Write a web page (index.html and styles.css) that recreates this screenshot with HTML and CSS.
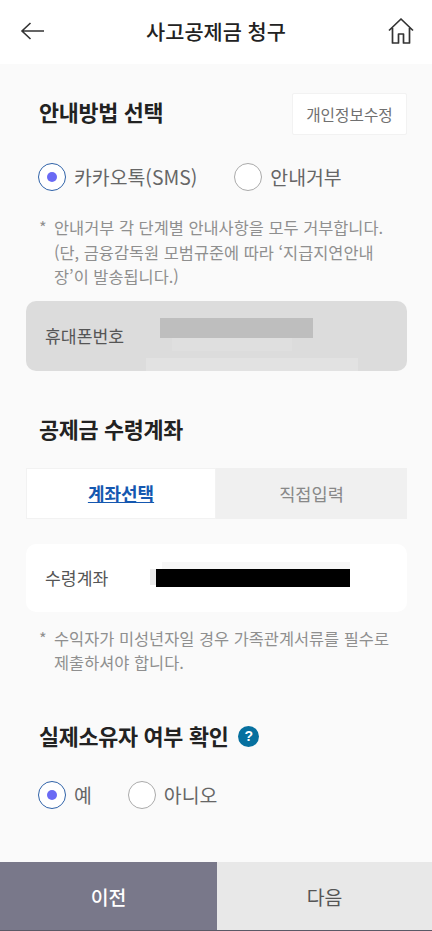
FILE: index.html
```html
<!DOCTYPE html>
<html lang="ko">
<head>
<meta charset="utf-8">
<title>사고공제금 청구</title>
<link rel="stylesheet" href="styles.css">
</head>
<body>
<div class="app">
  <header class="topbar">
    <svg class="ico-back" viewBox="0 0 26 20" width="26" height="20"><path d="M24 10H2M10.5 2 2 10l8.5 8" fill="none" stroke="#333" stroke-width="1.6"/></svg>
    <h1 class="title">사고공제금 청구</h1>
    <svg class="ico-home" viewBox="0 0 28 28" width="28" height="28"><path d="M2 13.5 14 2l12 11.5M5.5 11v15h6v-9h5v9h6V11" fill="none" stroke="#333" stroke-width="1.7" stroke-linejoin="round"/></svg>
  </header>
  <main class="content">
    <section class="head-row">
      <h2 class="sec-title">안내방법 선택</h2>
      <div class="edit-btn">개인정보수정</div>
    </section>
    <div class="radios r1">
      <label class="radio on"><i class="dot"></i><span>카카오톡(SMS)</span></label>
      <label class="radio"><i class="dot"></i><span>안내거부</span></label>
    </div>
    <div class="note n1"><span class="star">*</span><p>안내거부 각 단계별 안내사항을 모두 거부합니다.<br>(단, 금융감독원 모범규준에 따라 ‘지급지연안내<br>장’이 발송됩니다.)</p></div>
    <div class="field phone">
      <span class="field-label">휴대폰번호</span>
      <i class="mask m1"></i><i class="mask m2"></i><i class="mask m3"></i>
    </div>
    <h2 class="sec-title t2">공제금 수령계좌</h2>
    <div class="tabs">
      <div class="tab active">계좌선택</div>
      <div class="tab">직접입력</div>
    </div>
    <div class="field account">
      <span class="field-label">수령계좌</span>
      <i class="mask m5"></i><i class="mask m6"></i><i class="mask m4"></i>
    </div>
    <div class="note n2"><span class="star">*</span><p>수익자가 미성년자일 경우 가족관계서류를 필수로<br>제출하셔야 합니다.</p></div>
    <div class="owner-title">
      <h2 class="sec-title">실제소유자 여부 확인</h2>
      <span class="help">?</span>
    </div>
    <div class="radios r2">
      <label class="radio on"><i class="dot"></i><span>예</span></label>
      <label class="radio"><i class="dot"></i><span>아니오</span></label>
    </div>
  </main>
  <footer class="bottom">
    <div class="bbtn prev">이전</div>
    <div class="bbtn next">다음</div>
  </footer>
</div>
</body>
</html>
```

FILE: styles.css
```css
* { box-sizing: border-box; }
html, body { margin: 0; padding: 0; }
body { font-family: "Noto Sans CJK KR", "Noto Sans", sans-serif; background: #fafafa; color: #222; }
.app { width: 432px; height: 931px; display: flex; flex-direction: column; overflow: hidden; }
h1, h2, p { margin: 0; }
.topbar { height: 64px; flex: none; background: #fff; display: flex; align-items: center; justify-content: space-between; padding: 0 17px 2px 20px; position: relative; }
.title { position: absolute; left: 0; right: 0; text-align: center; font-size: 20.8px; font-weight: 500; line-height: 61px; color: #222; }
.content { flex: 1; padding: 0 25px 0 26px; display: flex; flex-direction: column; align-items: stretch; }
.head-row { display: flex; justify-content: space-between; align-items: center; margin-top: 29px; padding-left: 13px; height: 42px; }
.head-row .sec-title { margin-bottom: 5px; }
.sec-title { font-size: 21.8px; font-weight: 700; line-height: 32px; letter-spacing: -.3px; color: #222; }
.edit-btn { width: 115px; height: 42px; background: #fff; border: 1px solid #f2f2f2; border-radius: 2px; display: flex; align-items: center; justify-content: center; font-size: 15.7px; color: #707070; }
.radios { display: flex; align-items: center; padding-left: 12px; }
.r1 { margin-top: 28px; gap: 37px; }
.r2 { margin-top: 29px; gap: 36px; }
.radio { display: flex; align-items: center; gap: 8px; font-size: 19.4px; line-height: 28px; color: #666; }
.dot { width: 28px; height: 28px; border-radius: 50%; border: 1.3px solid #aaa; background: #fff; display: block; position: relative; }
.on .dot { border-color: #2f62a8; }
.on .dot::after { content: ""; position: absolute; left: 7.7px; top: 7.7px; width: 10px; height: 10px; border-radius: 50%; background: #6a6af4; }
.note { display: flex; font-size: 16.4px; line-height: 24.6px; color: #8f8f8f; padding-left: 13px; }
.star { width: 15px; flex: none; }
.n1 { margin-top: 24px; }
.n2 { margin-top: 14px; }
.field { position: relative; border-radius: 10px; height: 70px; display: flex; align-items: center; padding-left: 19px; font-size: 17.2px; color: #555; }
.phone { margin-top: 12px; background: #dcdcdc; }
.account { margin-top: 25px; height: 68px; background: #fff; }
.mask { position: absolute; display: block; }
.m1 { left: 134px; top: 17px; width: 153px; height: 20px; background: #bebebe; }
.m2 { left: 146px; top: 37px; width: 120px; height: 13px; background: #dfdfdf; }
.m3 { left: 120px; top: 57px; width: 212px; height: 13px; background: #e2e2e2; }
.m4 { left: 130px; top: 25px; width: 194px; height: 18px; background: #000; }
.m5 { left: 136px; top: 18px; width: 188px; height: 7px; background: #f7f7f7; }
.m6 { left: 124px; top: 25px; width: 6px; height: 16px; background: #ebebeb; }
.t2 { margin-top: 42px; padding-left: 13px; }
.tabs { display: flex; margin-top: 23px; height: 51px; background: #f0f0f0; }
.tab { flex: 1; display: flex; align-items: center; justify-content: center; font-size: 17.6px; color: #888; }
.tab.active { flex: none; width: 190px; background: #fff; color: #1558b0; font-size: 18px; font-weight: 700; text-decoration: underline; border: 1px solid #f2f2f2; }
.owner-title { display: flex; align-items: center; gap: 10px; margin-top: 45px; padding-left: 13px; }
.help { width: 21px; height: 21px; margin-top: 2px; border-radius: 50%; background: #06709f; color: #fff; font-size: 14px; font-weight: 700; line-height: 21px; text-align: center; font-family: "Liberation Sans", sans-serif; }
.bottom { flex: none; height: 69px; display: flex; border-bottom: 1px solid #5a5966; }
.bbtn { display: flex; align-items: center; justify-content: center; font-size: 19.4px; font-weight: 400; }
.prev { width: 217px; background: #79788a; color: #fff; font-weight: 500; }
.next { flex: 1; background: #e8e8e8; color: #555; }
```
